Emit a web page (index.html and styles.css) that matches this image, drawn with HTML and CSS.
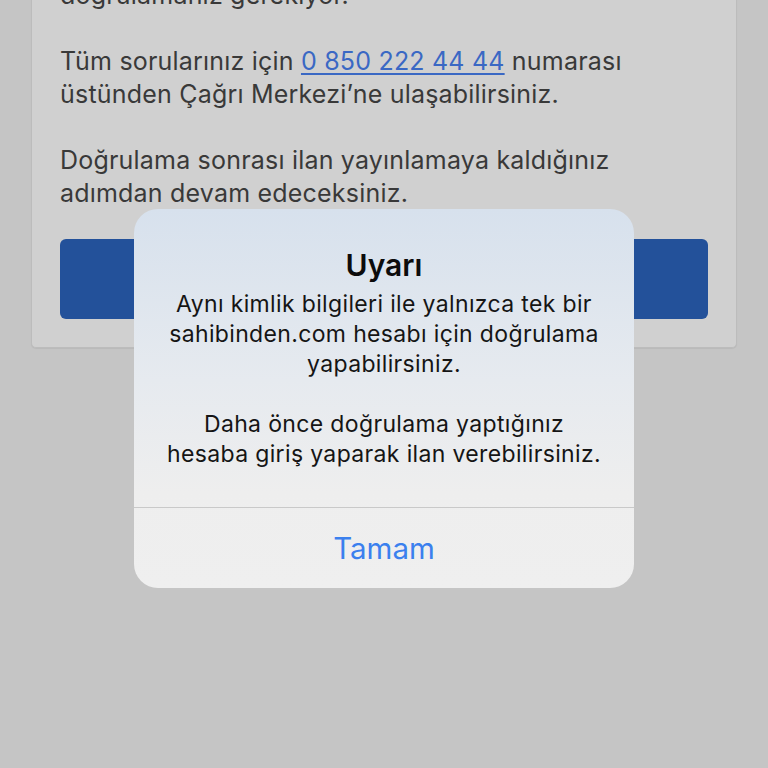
FILE: index.html
```html
<!DOCTYPE html>
<html lang="tr">
<head>
<meta charset="utf-8">
<link rel="stylesheet" href="styles.css">
</head>
<body>
<main class="page">
  <section class="card">
    <p class="para">doğrulamanız gerekiyor.</p>
    <p class="para">Tüm sorularınız için <a class="phone" href="#">0 850 222 44 44</a> numarası üstünden Çağrı Merkezi’ne ulaşabilirsiniz.</p>
    <p class="para">Doğrulama sonrası ilan yayınlamaya kaldığınız adımdan devam edeceksiniz.</p>
    <div class="cta"></div>
  </section>
</main>
<div class="alert" role="alertdialog">
  <div class="alert-body">
    <h2 class="alert-title">Uyarı</h2>
    <p class="alert-msg">Aynı kimlik bilgileri ile yalnızca tek bir sahibinden.com hesabı için doğrulama yapabilirsiniz.</p>
    <p class="alert-msg">Daha önce doğrulama yaptığınız hesaba giriş yaparak ilan verebilirsiniz.</p>
  </div>
  <div class="alert-actions">
    <button class="alert-btn">Tamam</button>
  </div>
</div>
</body>
</html>
```
FILE: styles.css
```css
html, body {
  margin: 0;
  padding: 0;
  height: 100%;
}
body {
  background: #c5c5c5;
  font-family: Inter, "Noto Sans", sans-serif;
  overflow: hidden;
}
.page {
  padding: 0 31px;
}
.card {
  margin-top: -21px;
  background: #d0d0d0;
  border: 1px solid #bcbcbc;
  border-top: none;
  border-radius: 0 0 5px 5px;
  padding: 0 28px 28px;
  box-shadow: 0 1px 1px rgba(0,0,0,0.06);
}
.para {
  margin: 0 0 33px;
  font-size: 25px;
  line-height: 33px;
  color: #393939;
  letter-spacing: 0.2px;
}
.para:nth-child(3) {
  margin-bottom: 29px;
}
.phone {
  color: #3a68c4;
  text-decoration: underline;
  text-underline-offset: 3px;
  text-decoration-thickness: 1.5px;
}
.cta {
  height: 80px;
  background: #23519a;
  border-radius: 6px;
}
.alert {
  position: absolute;
  left: 134px;
  top: 209px;
  width: 500px;
  border-radius: 24px;
  overflow: hidden;
  background: linear-gradient(180deg, #d7e1ed 0%, #e6eaef 45%, #eeeeee 75%, #efefef 100%);
  text-align: center;
  color: #111;
}
.alert-body {
  padding: 38px 26px 38px;
  border-bottom: 1.5px solid #c9c9c9;
}
.alert-title {
  margin: 0 0 6px;
  font-size: 30px;
  line-height: 36px;
  font-weight: 600;
  color: #0c0c0c;
}
.alert-msg {
  margin: 0 0 30px;
  font-size: 23px;
  line-height: 30px;
  color: #151515;
  letter-spacing: 0.35px;
}
.alert-msg:last-child {
  margin-bottom: 0;
}
.alert-actions {
  height: 80px;
  display: flex;
  align-items: center;
  justify-content: center;
}
.alert-btn {
  border: none;
  background: none;
  font-family: inherit;
  font-size: 29.5px;
  color: #3b80ee;
  padding: 0;
}
```
